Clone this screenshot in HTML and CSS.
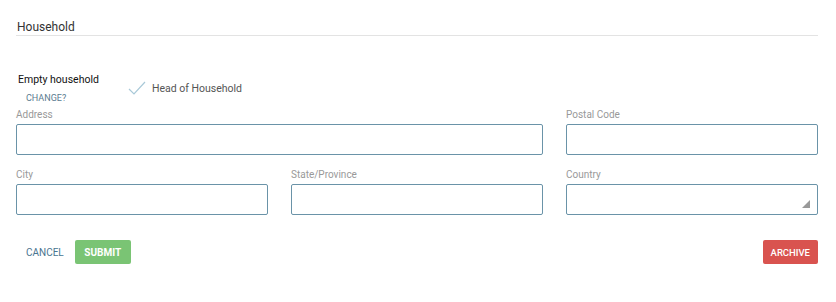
FILE: index.html
```html
<!DOCTYPE html>
<html lang="en">
<head>
    <meta charset="UTF-8">
    <meta name="viewport" content="width=device-width, initial-scale=1.0">
    <title>Household</title>
    <link rel="stylesheet" href="styles.css">
</head>
<body>
    <div class="panel">
        <h2 class="panel-title">Household</h2>

        <div class="household-row">
            <div class="household-info">
                <div class="household-name">Empty household</div>
                <a class="change-link" href="#">CHANGE?</a>
            </div>
            <div class="head-check">
                <svg class="check-icon" width="18" height="14" viewBox="0 0 18 14">
                    <path d="M1 8 L6 13 L17 1" fill="none" stroke="#a9c9d8" stroke-width="1.2"/>
                </svg>
                <span>Head of Household</span>
            </div>
        </div>

        <form class="address-form">
            <div class="field span-2">
                <label for="address">Address</label>
                <input type="text" id="address">
            </div>
            <div class="field">
                <label for="postal">Postal Code</label>
                <input type="text" id="postal">
            </div>
            <div class="field">
                <label for="city">City</label>
                <input type="text" id="city">
            </div>
            <div class="field">
                <label for="state">State/Province</label>
                <input type="text" id="state">
            </div>
            <div class="field">
                <label for="country">Country</label>
                <div class="select-box" id="country">
                    <span class="resize-corner"></span>
                </div>
            </div>
        </form>

        <div class="actions">
            <div class="actions-left">
                <button type="button" class="btn-link">CANCEL</button>
                <button type="submit" class="btn btn-submit">SUBMIT</button>
            </div>
            <button type="button" class="btn btn-archive">ARCHIVE</button>
        </div>
    </div>
</body>
</html>
```

FILE: styles.css
```css
/* General Styles */
body {
    font-family: Roboto, "Liberation Sans", sans-serif;
    margin: 0;
    padding: 0;
    background-color: #fff;
    color: #333;
}
.panel {
    padding: 16px 18px 0 16px;
}
.panel-title {
    font-size: 12px;
    font-weight: 400;
    margin: 0;
    padding: 4px 0 1px 1px;
    line-height: 14px;
    border-bottom: 1px solid #e3e3e3;
}
/* Household row */
.household-row {
    display: flex;
    align-items: flex-start;
    margin-top: 37px;
}
.household-info {
    width: 110px;
    padding-left: 2px;
}
.household-name {
    font-size: 10.5px;
    color: #111;
    line-height: 14px;
}
.change-link {
    display: block;
    font-size: 9px;
    color: #5a7b8f;
    text-decoration: none;
    margin: 6px 0 0 8px;
    line-height: 11px;
}
.head-check {
    display: flex;
    align-items: center;
    gap: 6px;
    margin-top: 8px;
    font-size: 10.5px;
    color: #555;
}
/* Form */
.address-form {
    display: grid;
    grid-template-columns: repeat(3, 1fr);
    column-gap: 23px;
    row-gap: 13px;
    margin-top: 4px;
}
.field {
    display: flex;
    flex-direction: column;
}
.span-2 {
    grid-column: span 2;
}
label {
    font-size: 10px;
    color: #999;
    line-height: 14px;
    margin-bottom: 2px;
}
input[type="text"],
.select-box {
    height: 31px;
    box-sizing: border-box;
    border: 1px solid #6a93a8;
    border-radius: 2px;
    padding: 0 8px;
    margin: 0;
    background-color: #fff;
    font-family: inherit;
}
.select-box {
    position: relative;
}
.resize-corner {
    position: absolute;
    right: 7px;
    bottom: 6px;
    width: 0;
    height: 0;
    border-left: 8px solid transparent;
    border-bottom: 8px solid #999;
}
/* Buttons */
.actions {
    display: flex;
    justify-content: space-between;
    align-items: center;
    margin-top: 25px;
}
.actions-left {
    display: flex;
    align-items: center;
    gap: 11px;
}
.btn-link {
    background: none;
    border: none;
    font-family: inherit;
    font-size: 10px;
    color: #4a7590;
    padding: 0 0 0 10px;
    cursor: pointer;
}
.btn {
    border: none;
    border-radius: 2px;
    color: #fff;
    font-family: inherit;
    font-size: 10px;
    font-weight: 700;
    height: 24px;
    padding: 0 9.5px;
    cursor: pointer;
}
.btn-submit {
    background-color: #7ac474;
}
.btn-archive {
    background-color: #d9534f;
    font-size: 9.5px;
    font-weight: 500;
    padding: 0 8px;
}
```
